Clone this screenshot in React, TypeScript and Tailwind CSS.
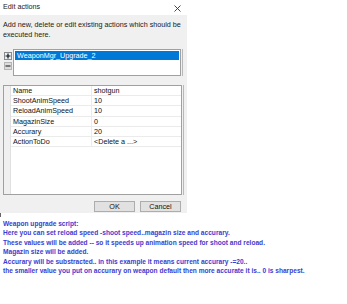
import React from "react";

const rows: [string, string][] = [
  ["Name", "shotgun"],
  ["ShootAnimSpeed", "10"],
  ["ReloadAnimSpeed", "10"],
  ["MagazinSize", "0"],
  ["Accurary", "20"],
  ["ActionToDo", "<Delete a ...>"],
];

const notes = [
  "Weapon upgrade script:",
  "Here you can set reload speed -shoot speed..magazin size and accurary.",
  "These values will be added -- so it speeds up animation speed for shoot and reload.",
  "Magazin size will be added.",
  "Accurary will be substracted.. in this example it means current accurary -=20..",
  "the smaller value you put on accurary on weapon default then more accurate it is.. 0 is sharpest.",
];

export default function App() {
  return (
    <div
      className="w-[347px] h-[304px] bg-white overflow-hidden relative"
      style={{ fontFamily: '"Liberation Sans", Arial, sans-serif' }}
    >
      <div className="w-[187px]">
        {/* title bar */}
        <div className="h-[15px] bg-white flex items-center justify-between pl-[3px] pr-[6px]">
          <span className="text-[7.2px] text-[#222]">Edit actions</span>
          <svg width="7" height="7" viewBox="0 0 7 7" className="mt-[1px]">
            <path d="M0.5 0.5 L6.5 6.5 M6.5 0.5 L0.5 6.5" stroke="#333" strokeWidth="0.9" />
          </svg>
        </div>
        {/* body */}
        <div className="h-[198px] bg-[#f0f0f0] flex flex-col pl-[3px] pt-[5px]">
          <p className="text-[7.2px] leading-[9.5px] text-[#1a1a1a] whitespace-nowrap">
            Add new, delete or edit existing actions which should be
            <br />
            executed here.
          </p>
          {/* list row */}
          <div className="flex mt-[10px] h-[27px]">
            <div className="flex flex-col w-[10px] pt-[3px] gap-[2px] pl-[1px]">
              <div className="w-[8px] h-[8px] border border-[#8a8a8a] bg-[#e8eef8] flex items-center justify-center">
                <svg width="6" height="6" viewBox="0 0 6 6">
                  <path d="M3 0.5 V5.5 M0.5 3 H5.5" stroke="#111" strokeWidth="1.2" />
                </svg>
              </div>
              <div className="w-[8px] h-[8px] border border-[#b5b5b5] bg-[#dcdcdc] flex items-center justify-center">
                <svg width="6" height="6" viewBox="0 0 6 6">
                  <path d="M0.5 3 H5.5" stroke="#333" strokeWidth="1.2" />
                </svg>
              </div>
            </div>
            <div className="w-[168px] border border-[#a0a0a0] bg-white p-[1px]">
              <div className="h-[9px] bg-[#0078d7] text-white text-[7.2px] leading-[9px] pl-[2px]">
                WeaponMgr_Upgrade_2
              </div>
            </div>
            <div className="w-[1px] bg-[#b8b8b8] ml-[1px]" />
          </div>
          {/* property grid */}
          <div className="flex mt-[9px] h-[110px]">
            <div className="w-[179px] border border-[#a0a0a0] bg-white flex">
              <div className="w-[7px] bg-[#f0f0f0] border-r border-[#e0e0e0]" />
              <div className="flex-1 flex flex-col">
                {rows.map(([k, v]) => (
                  <div key={k} className="flex h-[10.2px] border-b border-[#ebebeb] text-[7.2px] leading-[9.5px] text-[#111]">
                    <div className="w-[81px] pl-[2px] border-r border-[#ebebeb]">{k}</div>
                    <div className="flex-1 pl-[2px]">{v}</div>
                  </div>
                ))}
              </div>
            </div>
            <div className="w-[1px] bg-[#b8b8b8] ml-[1px]" />
          </div>
          {/* buttons */}
          <div className="flex mt-[6px] h-[11px] pl-[91px] gap-[5px]">
            <div className="w-[41px] border border-[#adadad] bg-[#e1e1e1] text-[7.2px] leading-[9px] flex items-center justify-center text-[#111]">
              OK
            </div>
            <div className="w-[41px] border border-[#adadad] bg-[#e1e1e1] text-[7.2px] leading-[9px] flex items-center justify-center text-[#111]">
              Cancel
            </div>
          </div>
        </div>
      </div>
      <div className="w-[1px] h-[4px] bg-[#666]" />
      <div className="pl-[3px] pt-[2px] font-bold text-[#3c3cd0] text-[6.6px] leading-[9.4px]">
        {notes.map((n) => (
          <div key={n} className="whitespace-nowrap">{n}</div>
        ))}
      </div>
    </div>
  );
}
